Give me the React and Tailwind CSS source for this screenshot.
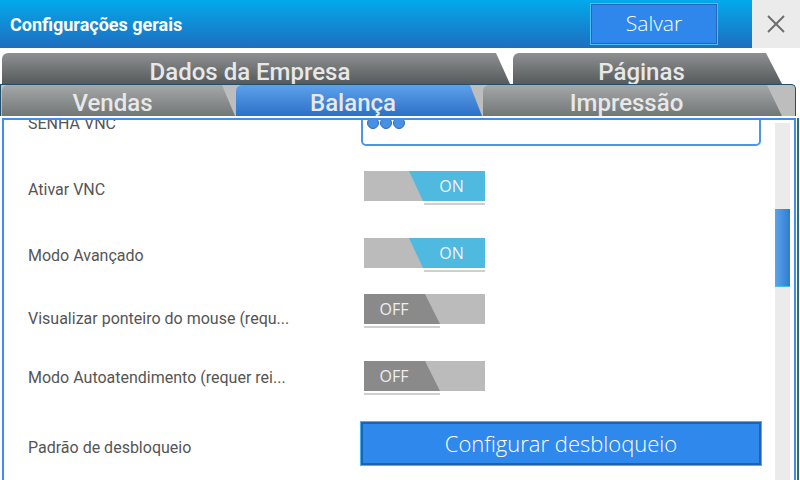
import React from "react";

const Toggle = ({ on }) => (
  <div className="ml-[3px] w-[121px]">
    <div className="relative h-[30px] bg-[#bbbbbb]">
      {on ? (
        <div className="absolute inset-0 bg-[#4fb9e0] [clip-path:polygon(45px_0,100%_0,100%_100%,59px_100%)]" />
      ) : (
        <div className="absolute inset-0 bg-[#8a8a8a] [clip-path:polygon(0_0,61px_0,76px_100%,0_100%)]" />
      )}
      {on ? (
        <span className="absolute inset-y-0 left-[54px] right-0 flex items-center justify-center text-[16px] text-[#f2f2f2] font-['Open_Sans',sans-serif]">
          ON
        </span>
      ) : (
        <span className="absolute inset-y-0 left-0 w-[60px] flex items-center justify-center text-[16px] text-[#eeeeee] font-['Open_Sans',sans-serif]">
          OFF
        </span>
      )}
    </div>
    <div
      className={
        on
          ? "mt-[2px] ml-[60px] h-[2px] bg-[#cfcfcf]"
          : "mt-[2px] w-[76px] h-[2px] bg-[#cfcfcf]"
      }
    />
  </div>
);

const Row = ({ h, label, children, lc = "" }) => (
  <div className={"flex items-center " + h}>
    <div className={"w-[333px] text-[16px] text-[#555555] whitespace-nowrap " + lc}>{label}</div>
    <div>{children}</div>
  </div>
);

const Tab = ({ w, slant, tone, label, pt }) => {
  const tones = {
    back: "bg-[linear-gradient(#8e9090,#565a5c)]",
    front: "bg-[linear-gradient(#a6a8a8,#727676)]",
    sel: "bg-[linear-gradient(#5ea1ea,#2c70c8)]",
  };
  return (
    <div
      className={
        "h-full shrink-0 rounded-tl-[6px] rounded-tr-[6px] overflow-hidden flex justify-center " +
        w +
        " " +
        slant +
        " " +
        tones[tone] +
        " " +
        pt
      }
    >
      <span className="pr-[12px] text-[24px] leading-[24px] font-medium text-[#e8e8e8] whitespace-nowrap">
        {label}
      </span>
    </div>
  );
};

export default function App() {
  return (
    <div className="w-[800px] h-[480px] overflow-hidden bg-white flex flex-col font-['Roboto',sans-serif]">
      {/* Header */}
      <div className="h-[48px] shrink-0 flex">
        <div className="flex-1 flex items-center bg-[linear-gradient(#02aaeb,#1f6dbf)]">
          <span className="ml-[10px] text-[18px] font-bold text-white">Configurações gerais</span>
          <button className="ml-auto mr-[34px] w-[128px] h-[42px] bg-[#2f87eb] border border-[#4fc0f5] shadow-[inset_0_0_0_1px_#2166b8] flex items-center justify-center text-[21px] font-light text-white font-['Open_Sans',sans-serif]">
            Salvar
          </button>
        </div>
        <div className="w-[48px] bg-[#ebebeb] flex items-center justify-center">
          <svg width="18" height="18" viewBox="0 0 18 18">
            <path d="M1 1 L17 17 M17 1 L1 17" stroke="#6a6a6a" strokeWidth="1.8" fill="none" />
          </svg>
        </div>
      </div>

      <div className="h-[5px] shrink-0" />

      {/* Back tab row */}
      <div className="h-[31px] shrink-0 flex pl-[2px] gap-[3px]">
        <Tab w="w-[508px]" slant="[clip-path:polygon(0_0,calc(100%-14px)_0,100%_100%,0_100%)]" tone="back" label="Dados da Empresa" pt="pt-[7px]" />
        <Tab w="w-[269px]" slant="[clip-path:polygon(0_0,calc(100%-16px)_0,100%_100%,0_100%)]" tone="back" label="Páginas" pt="pt-[7px]" />
      </div>

      {/* Front tab row */}
      <div className="h-[32px] shrink-0 w-[796px] flex pl-[1px] gap-[1px] bg-[#bdbdbd] border border-b-0 border-[#22506a] rounded-tr-[5px]">
        <Tab w="w-[233px]" slant="[clip-path:polygon(0_0,calc(100%-13px)_0,100%_100%,0_100%)]" tone="front" label="Vendas" pt="pt-[6px]" />
        <Tab w="w-[246px]" slant="[clip-path:polygon(0_0,calc(100%-12px)_0,100%_100%,0_100%)]" tone="sel" label="Balança" pt="pt-[6px]" />
        <Tab w="w-[299px]" slant="[clip-path:polygon(0_0,calc(100%-15px)_0,100%_100%,0_100%)]" tone="front" label="Impressão" pt="pt-[6px]" />
      </div>

      <div className="h-[2px] shrink-0" />

      {/* Panel */}
      <div className="flex-1 flex">
        <div className="ml-[2px] w-[794px] border-2 border-b-0 border-[#3d8fe8] flex overflow-hidden">
          <div className="flex-1 pl-[24px] overflow-hidden">
            <div className="mt-[-20px]">
              <Row h="h-[48px]" label="SENHA VNC">
                <div className="w-[400px] h-[44px] border-2 border-[#4d95ec] rounded-[5px] flex gap-[1px] pl-[4px] pt-[13px]">
                  <span className="w-[12px] h-[12px] rounded-full bg-[#4a90e2] border border-[#2a6cc0]" />
                  <span className="w-[12px] h-[12px] rounded-full bg-[#4a90e2] border border-[#2a6cc0]" />
                  <span className="w-[12px] h-[12px] rounded-full bg-[#4a90e2] border border-[#2a6cc0]" />
                </div>
              </Row>
              <Row h="h-[80px]" label="Ativar VNC" lc="pt-[3px]">
                <Toggle on />
              </Row>
              <Row h="h-[54px]" label="Modo Avançado" lc="pt-[2px]">
                <Toggle on />
              </Row>
              <Row h="h-[58px]" label="Visualizar ponteiro do mouse (requ..." lc="pt-[16px]">
                <Toggle on={false} />
              </Row>
              <Row h="h-[76px]" label="Modo Autoatendimento (requer rei...">
                <Toggle on={false} />
              </Row>
              <Row h="h-[55px]" label="Padrão de desbloqueio" lc="pt-[9px]">
                <button className="w-[400px] h-[43px] bg-[#2f88ec] border-2 border-[#1f62ad] shadow-[0_0_0_1px_#3cb9f5] flex items-center justify-center text-[22px] font-light text-white font-['Open_Sans',sans-serif]">
                  Configurar desbloqueio
                </button>
              </Row>
            </div>
          </div>
          <div className="w-[15px] mr-[4px] mt-[3px] bg-[#ebebeb] shrink-0">
            <div className="mt-[86px] h-[78px] bg-[linear-gradient(to_right,#5ca3ec,#2f7dd0)] border-b border-[#35c3f2]" />
          </div>
        </div>
        <div className="ml-[1px] w-[2px] bg-[#2c6c80]" />
      </div>
    </div>
  );
}
